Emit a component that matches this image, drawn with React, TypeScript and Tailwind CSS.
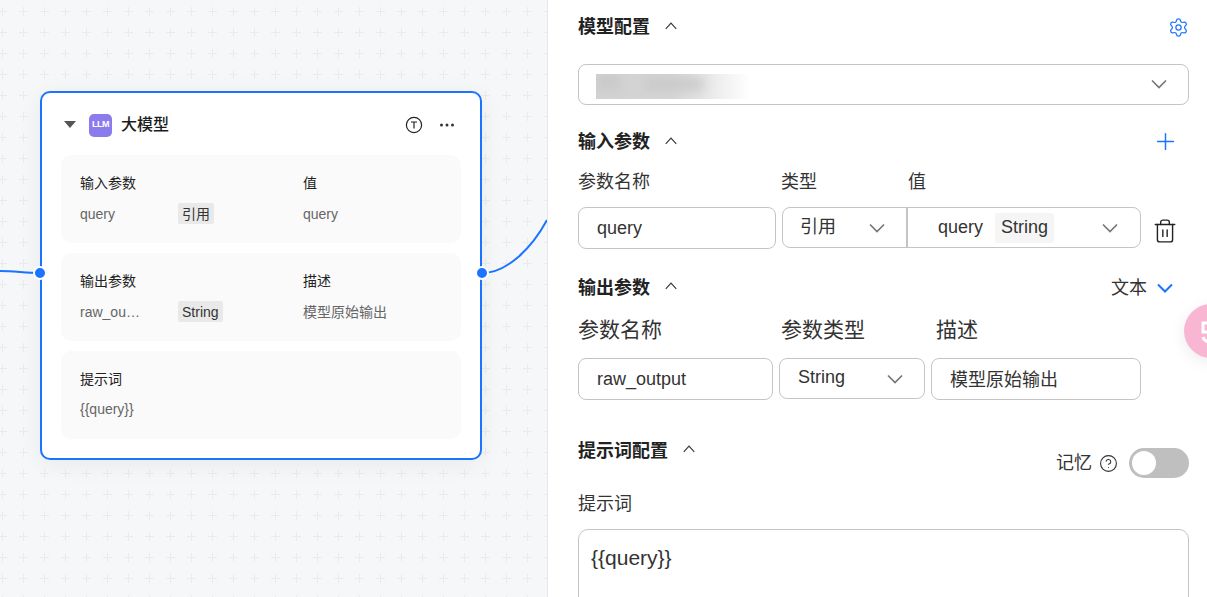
import React from 'react';
import { Plus, Settings, Trash2, CircleHelp } from 'lucide-react';

const FONT = { fontFamily: '"Liberation Sans", "Noto Sans CJK SC", sans-serif' };

function PlusGrid() {
  return (
    <svg className="absolute inset-0 h-full w-full" aria-hidden="true">
      <defs>
        <pattern id="dots" x="-9" y="1" width="21" height="21" patternUnits="userSpaceOnUse">
          <path d="M7 10.5h9M11.5 6v9" stroke="#e9ebee" strokeWidth="1" fill="none" />
        </pattern>
      </defs>
      <rect width="100%" height="100%" fill="url(#dots)" />
    </svg>
  );
}

// select arrow, drawn wider than lucide's one
function Arrow({ color = '#777', up = false, w = 16, h = 10, sw = 1.7 }: { color?: string; up?: boolean; w?: number; h?: number; sw?: number }) {
  return (
    <svg width={w} height={h} viewBox="0 0 16 10" preserveAspectRatio="none" fill="none" className="shrink-0">
      <path d={up ? 'M1 8.5L8 1.5l7 7' : 'M1 1.5l7 7 7-7'} stroke={color} strokeWidth={sw} />
    </svg>
  );
}

function ParamCard({ children }: { children: React.ReactNode }) {
  return <div className="h-[88px] rounded-[10px] bg-[#fafafa] pl-[19px] pt-[18px] text-[14px] leading-5">{children}</div>;
}

function ParamRow({ head, name, tag, value, headRight }: { head: string; name: string; tag: string; value: string; headRight: string }) {
  return (
    <ParamCard>
      <div className="flex text-[#222]">
        <span className="w-[223px]">{head}</span>
        <span>{headRight}</span>
      </div>
      <div className="mt-[10px] flex items-center text-[#666]">
        <span className="w-[98px]">{name}</span>
        <span className="mr-[80px] w-[45px]">
          <span className="inline-flex h-[21px] items-center rounded-[2px] bg-[#e9e9e9] px-[4px] text-[#333]">{tag}</span>
        </span>
        <span>{value}</span>
      </div>
    </ParamCard>
  );
}

function Node() {
  return (
    <div className="absolute left-[40px] top-[91px] h-[369px] w-[442px] rounded-[10px] border-2 border-[#1a74ff] bg-white px-[19px] shadow-[0_4px_24px_rgba(0,0,0,0.06)]">
      <div className="flex h-[62px] items-center pt-[2px]">
        <svg width="12" height="8" viewBox="0 0 12 8" className="ml-[3px]"><path d="M0 0h12L6 7z" fill="#555" /></svg>
        <div className="ml-[13px] flex h-[23px] w-[23px] items-center justify-center rounded-[5px] bg-[#8b7bec] text-[9px] font-bold tracking-tighter text-white">LLM</div>
        <span className="ml-[9px] text-[16px] font-medium text-[#1c1c1c]">大模型</span>
        <div className="ml-auto mr-[6px] flex items-center gap-[16px]">
          <svg width="18" height="18" viewBox="0 0 18 18" fill="none" stroke="#222" strokeWidth="1.2">
            <circle cx="9" cy="9" r="7.6" />
            <path d="M6 6h6M9 6v6.5" />
          </svg>
          <svg width="16" height="4" viewBox="0 0 16 4" fill="#333">
            <circle cx="2.5" cy="2" r="1.5" />
            <circle cx="8" cy="2" r="1.5" />
            <circle cx="13.5" cy="2" r="1.5" />
          </svg>
        </div>
      </div>
      <div className="flex flex-col gap-[10px]">
        <ParamRow head="输入参数" headRight="值" name="query" tag="引用" value="query" />
        <ParamRow head="输出参数" headRight="描述" name="raw_ou…" tag="String" value="模型原始输出" />
        <ParamCard>
          <div className="text-[#222]">提示词</div>
          <div className="mt-[10px] text-[#666]">{'{{query}}'}</div>
        </ParamCard>
      </div>
      <span className="absolute left-[-9px] top-[173px] h-[14px] w-[14px] rounded-full border-2 border-white bg-[#1a74ff]" />
      <span className="absolute right-[-9px] top-[173px] h-[14px] w-[14px] rounded-full border-2 border-white bg-[#1a74ff]" />
    </div>
  );
}

function SectionHead({ title, right, className }: { title: string; right?: React.ReactNode; className?: string }) {
  return (
    <div className={`flex items-center justify-between ${className ?? ''}`}>
      <div className="flex items-center gap-[15px]">
        <span className="text-[18px] font-bold text-[#222]">{title}</span>
        <span className="-translate-y-[2px]">
          <Arrow up color="#333" w={12} h={8} sw={1.5} />
        </span>
      </div>
      {right}
    </div>
  );
}

const box = 'flex items-center rounded-[8px] border border-[#c4c4c4] bg-white text-[18px] text-[#333]';

function Panel() {
  return (
    <div className="relative h-full flex-1 overflow-hidden border-l border-[#e5e7eb] bg-white pl-[30px] pr-[18px] pt-[15px]">
      <SectionHead title="模型配置" className="h-[25px]" right={<Settings size={21} color="#1a74ff" strokeWidth={1.4} />} />
      <div className="mt-[24px] flex h-[41px] items-center rounded-[8px] border border-[#c4c4c4] pl-[17px] pr-[21px]">
        {/* name of the model is blurred out in the picture */}
        <div className="relative mt-[4px] h-[25px] w-[154px] overflow-hidden bg-gradient-to-r from-[#d2d2d2] via-[#d6d6d6] to-white">
          <div className="absolute left-[2px] top-[2px] h-[12px] w-[22px] bg-[#c6c6c6] blur-[6px]" />
          <div className="absolute left-[48px] top-[4px] h-[12px] w-[60px] bg-[#c8c8c8] blur-[6px]" />
        </div>
        <span className="ml-auto -translate-y-[1px]"><Arrow /></span>
      </div>

      <SectionHead title="输入参数" className="mt-[25px] h-[25px] pr-[10px]" right={<Plus size={27} color="#1a74ff" strokeWidth={1.3} className="-translate-y-[1px]" />} />
      <div className="mt-[15px] flex h-[24px] items-center text-[18px] text-[#333]">
        <span className="w-[203px]">参数名称</span>
        <span className="w-[127px]">类型</span>
        <span>值</span>
      </div>
      <div className="mt-[13px] flex items-start">
        <div className={`${box} h-[42px] w-[198px] pl-[18px]`}>query</div>
        <div className={`${box} ml-[6px] h-[41px] w-[359px]`}>
          <div className="flex h-full w-[125px] items-center justify-between border-r-2 border-[#c4c4c4] pl-[17px] pr-[21px]">
            <span>引用</span>
            <Arrow />
          </div>
          <div className="flex flex-1 items-center pl-[30px] pr-[22px]">
            <span>query</span>
            <span className="ml-[12px] flex h-[30px] items-center rounded-[3px] bg-[#f5f5f5] px-[6px]">String</span>
            <span className="ml-auto"><Arrow /></span>
          </div>
        </div>
        <Trash2 size={26} color="#222" strokeWidth={1.3} className="ml-[11px] mt-[11px]" />
      </div>

      <SectionHead
        title="输出参数"
        className="mt-[27px] h-[24px] pr-[16px]"
        right={
          <div className="flex items-center gap-[10px] text-[18px] text-[#333]">
            文本
            <Arrow color="#1a74ff" sw={2} />
          </div>
        }
      />
      <div className="mt-[16px] flex h-[28px] items-center text-[21px] text-[#333]">
        <span className="w-[203px]">参数名称</span>
        <span className="w-[155px]">参数类型</span>
        <span>描述</span>
      </div>
      <div className="mt-[14px] flex items-start gap-[6px]">
        <div className={`${box} h-[42px] w-[195px] pl-[18px]`}>raw_output</div>
        <div className={`${box} h-[41px] w-[146px] justify-between pl-[18px] pr-[21px]`}>
          <span className="-translate-y-[1px]">String</span>
          <Arrow />
        </div>
        <div className={`${box} h-[42px] w-[210px] pl-[18px] pt-[2px]`}>模型原始输出</div>
      </div>

      <div className="mt-[39px] flex items-start justify-between">
        <SectionHead title="提示词配置" className="h-[24px]" />
        <div className="mt-[9px] flex items-center text-[18px] text-[#333]">
          记忆
          <CircleHelp size={19} color="#333" strokeWidth={1.4} className="ml-[7px]" />
          <div className="ml-[11px] flex h-[30px] w-[60px] items-center rounded-full bg-[#bfbfbf] pl-[3px]">
            <span className="h-[24px] w-[24px] rounded-full bg-white" />
          </div>
        </div>
      </div>
      <div className="mt-[12px] h-[28px] text-[18px] leading-[28px] text-[#333]">提示词</div>
      <div className="mt-[11px] h-[120px] rounded-[10px] border border-[#c4c4c4] px-[12px] pt-[14px] text-[21px] leading-[28px] text-[#333]">{'{{query}}'}</div>

      {/* floating pink button, mostly outside of the window */}
      <div className="absolute left-[636px] top-[304px] h-[54px] w-[54px] overflow-hidden rounded-full bg-[#f9b6d2] shadow-[0_4px_16px_rgba(0,0,0,0.08)]">
        <svg width="54" height="54" viewBox="0 0 54 54" fill="none" stroke="#fff" strokeWidth="3">
          <path d="M30 19h-11v9h11M19 33c2 6 9 6 11 2" />
        </svg>
      </div>
    </div>
  );
}

export default function App() {
  return (
    <div className="flex h-[597px] w-[1207px] overflow-hidden bg-white" style={FONT}>
      <div className="relative h-full w-[547px] shrink-0 overflow-hidden bg-[#f6f7f8]">
        <PlusGrid />
        <svg className="absolute inset-0 h-full w-full" fill="none" stroke="#1a74ff" strokeWidth="2">
          <path d="M0 271c15 0 25 2 40 2" />
          <path d="M482 273c25 0 50-25 65-53" />
        </svg>
        <Node />
      </div>
      <Panel />
    </div>
  );
}
